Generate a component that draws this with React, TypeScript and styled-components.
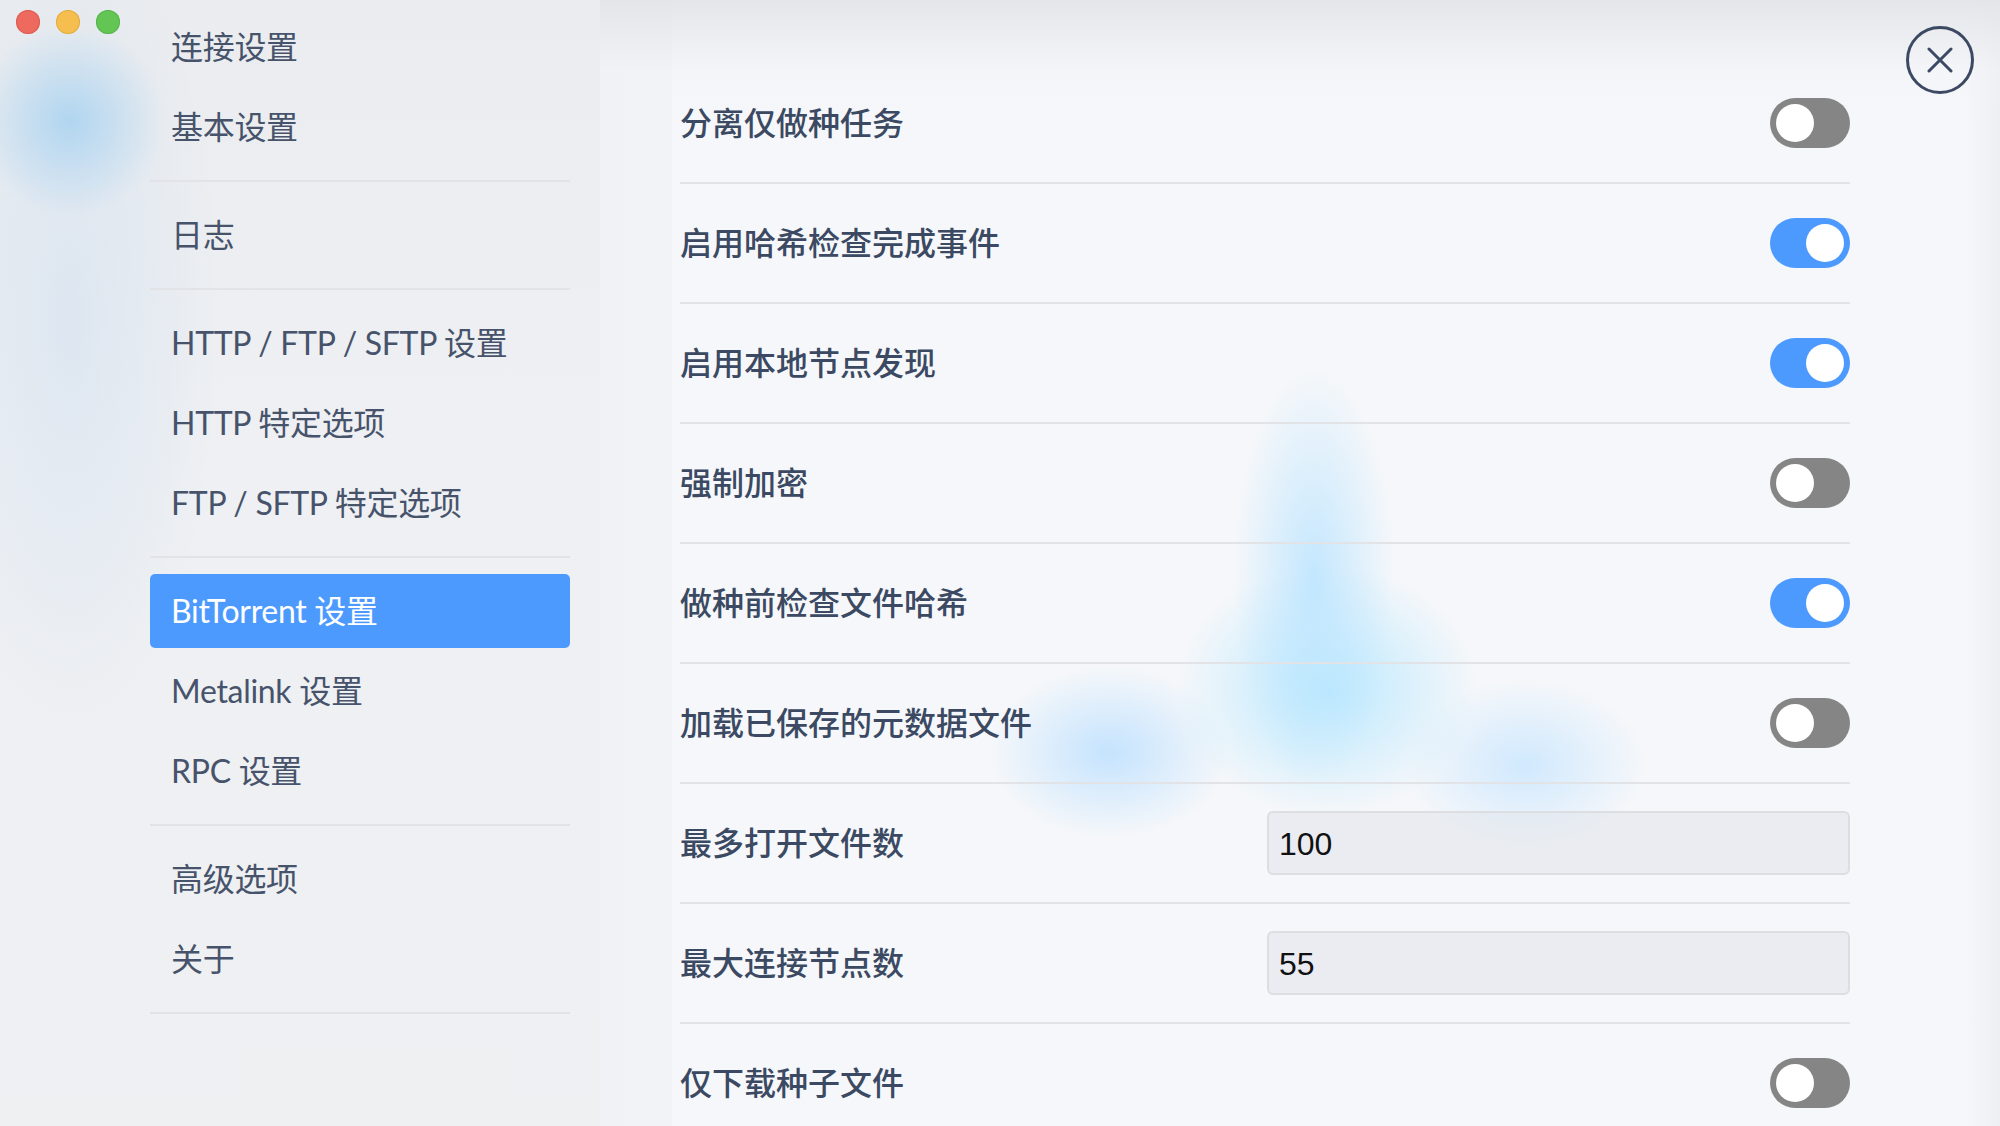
import React from 'react';
import styled, { createGlobalStyle } from 'styled-components';

const GlobalStyle = createGlobalStyle`
  html, body {
    margin: 0;
    padding: 0;
    width: 2000px;
    height: 1126px;
    overflow: hidden;
    background: #f7f7f8;
  }
  * { box-sizing: border-box; }
  #root { width: 2000px; height: 1126px; }
`;

const Window = styled.div`
  position: relative;
  width: 2000px;
  height: 1126px;
  display: flex;
  overflow: hidden;
  font-family: Lato, "Noto Sans CJK SC", sans-serif;
`;

const Sidebar = styled.aside`
  width: 600px;
  flex: none;
  display: flex;
  background:
    radial-gradient(circle 95px at 70px 121px, rgba(168, 210, 240, 0.85), rgba(190, 220, 240, 0) 100%),
    radial-gradient(ellipse 150px 420px at 70px 320px, rgba(205, 222, 240, 0.5), rgba(205, 222, 240, 0) 100%),
    linear-gradient(180deg, #eaecef 0%, #eef0f3 40%, #eff0f2 100%);
`;

const TitleBar = styled.div`
  width: 150px;
  flex: none;
  display: flex;
  align-items: flex-start;
  gap: 16px;
  padding: 10px 0 0 16px;
`;

const Light = styled.span<{ $color: string; $edge: string }>`
  width: 24px;
  height: 24px;
  flex: none;
  border-radius: 50%;
  background: ${(p) => p.$color};
  box-shadow: inset 0 0 0 1px ${(p) => p.$edge};
`;

const Nav = styled.nav`
  width: 420px;
  flex: none;
  display: flex;
  flex-direction: column;
`;

const Group = styled.div<{ $first?: boolean }>`
  display: flex;
  flex-direction: column;
  padding: ${(p) => (p.$first ? '7px 0 13px' : '13px 0')};
  border-bottom: 2px solid #e1e3e7;
`;

const NavItem = styled.div<{ $active?: boolean }>`
  height: 74px;
  margin: 3px 0;
  padding: 0 0 5px 21px;
  display: flex;
  align-items: center;
  border-radius: 5px;
  font-size: 32px;
  font-weight: 400;
  letter-spacing: -0.3px;
  white-space: pre;
  color: ${(p) => (p.$active ? '#ffffff' : '#47536b')};
  background: ${(p) => (p.$active ? '#4d9aff' : 'transparent')};
`;

const Main = styled.main`
  flex: 1;
  padding: 64px 0 0 80px;
  background:
    radial-gradient(ellipse 80px 210px at 714px 580px, rgba(186, 228, 255, 0.85), rgba(186, 228, 255, 0) 100%),
    radial-gradient(ellipse 150px 125px at 727px 690px, rgba(184, 232, 255, 0.95), rgba(184, 232, 255, 0) 100%),
    radial-gradient(ellipse 120px 85px at 510px 752px, rgba(188, 224, 255, 0.85), rgba(188, 224, 255, 0) 100%),
    radial-gradient(ellipse 120px 85px at 925px 765px, rgba(196, 228, 255, 0.75), rgba(196, 228, 255, 0) 100%),
    linear-gradient(180deg, rgba(226, 228, 232, 0.9) 0px, rgba(240, 242, 245, 0.4) 70px, rgba(245, 247, 250, 0) 120px),
    linear-gradient(90deg, #f0f2f5 0px, #f1f3f6 72px, #f5f7fa 72px, #f5f7fa 1365px, #eeeff2 1400px);
`;

const Form = styled.div`
  width: 1170px;
  display: flex;
  flex-direction: column;
`;

const Row = styled.div`
  height: 120px;
  flex: none;
  display: flex;
  align-items: center;
  justify-content: space-between;
  border-bottom: 2px solid #e1e3e7;
`;

const Label = styled.span`
  font-family: "Noto Sans CJK SC", sans-serif;
  font-size: 32px;
  font-weight: 500;
  color: #3b4962;
  padding-bottom: 5px;
`;

const Switch = styled.span<{ $on: boolean }>`
  position: relative;
  width: 80px;
  height: 50px;
  flex: none;
  border-radius: 25px;
  background: ${(p) => (p.$on ? '#4d9aff' : '#858585')};

  &::after {
    content: '';
    position: absolute;
    top: 6px;
    left: ${(p) => (p.$on ? '36px' : '6px')};
    width: 38px;
    height: 38px;
    border-radius: 50%;
    background: #ffffff;
  }
`;

const NumberField = styled.div`
  width: 583px;
  height: 64px;
  flex: none;
  display: flex;
  align-items: center;
  padding: 2px 10px 0;
  border: 2px solid #dcdee2;
  border-radius: 6px;
  background: rgba(228, 231, 236, 0.65);
  font-family: "Liberation Sans", Arial, sans-serif;
  font-size: 32px;
  color: #111111;
`;

const CloseButton = styled.button`
  position: absolute;
  top: 26px;
  right: 26px;
  width: 68px;
  height: 68px;
  padding: 0;
  border: 3px solid #3c4962;
  border-radius: 50%;
  background: transparent;
  display: flex;
  align-items: center;
  justify-content: center;
  color: #3c4962;
`;

type Setting =
  | { label: string; kind: 'switch'; on: boolean }
  | { label: string; kind: 'number'; value: string };

const settings: Setting[] = [
  { label: '分离仅做种任务', kind: 'switch', on: false },
  { label: '启用哈希检查完成事件', kind: 'switch', on: true },
  { label: '启用本地节点发现', kind: 'switch', on: true },
  { label: '强制加密', kind: 'switch', on: false },
  { label: '做种前检查文件哈希', kind: 'switch', on: true },
  { label: '加载已保存的元数据文件', kind: 'switch', on: false },
  { label: '最多打开文件数', kind: 'number', value: '100' },
  { label: '最大连接节点数', kind: 'number', value: '55' },
  { label: '仅下载种子文件', kind: 'switch', on: false },
];

const navGroups: string[][] = [
  ['连接设置', '基本设置'],
  ['日志'],
  ['HTTP / FTP / SFTP 设置', 'HTTP 特定选项', 'FTP / SFTP 特定选项'],
  ['BitTorrent 设置', 'Metalink 设置', 'RPC 设置'],
  ['高级选项', '关于'],
];

export default function App() {
  return (
    <>
      <GlobalStyle />
      <Window>
        <Sidebar>
          <TitleBar>
            <Light $color="#ee6a5f" $edge="rgba(208, 78, 66, 0.6)" />
            <Light $color="#f5be4f" $edge="rgba(214, 160, 50, 0.6)" />
            <Light $color="#62c554" $edge="rgba(74, 168, 62, 0.6)" />
          </TitleBar>
          <Nav>
            {navGroups.map((group, gi) => (
              <Group key={gi} $first={gi === 0}>
                {group.map((item) => (
                  <NavItem key={item} $active={item === 'BitTorrent 设置'}>
                    {item}
                  </NavItem>
                ))}
              </Group>
            ))}
          </Nav>
        </Sidebar>
        <Main>
          <Form>
            {settings.map((s) => (
              <Row key={s.label}>
                <Label>{s.label}</Label>
                {s.kind === 'switch' ? (
                  <Switch $on={s.on} />
                ) : (
                  <NumberField>{s.value}</NumberField>
                )}
              </Row>
            ))}
          </Form>
        </Main>
        <CloseButton aria-label="关闭">
          <svg width="26" height="26" viewBox="0 0 26 26" fill="none">
            <path d="M2 2 L24 24 M24 2 L2 24" stroke="currentColor" strokeWidth="3" strokeLinecap="round" />
          </svg>
        </CloseButton>
      </Window>
    </>
  );
}
